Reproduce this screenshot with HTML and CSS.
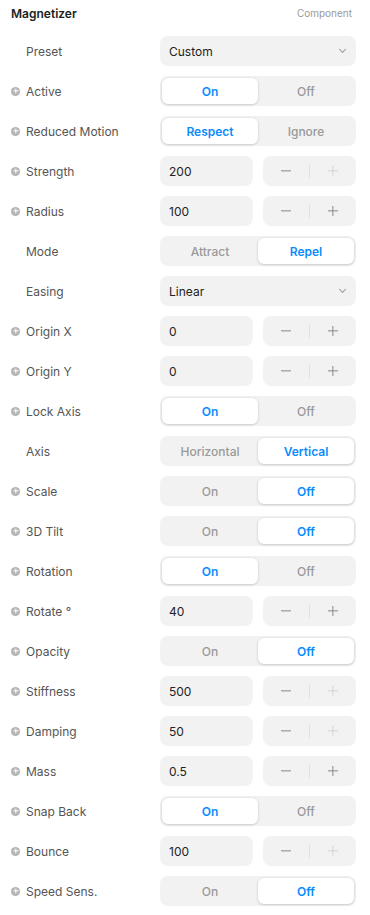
FILE: index.html
```html
<!DOCTYPE html>
<html lang="en">
<head>
    <meta charset="UTF-8">
    <meta name="viewport" content="width=device-width, initial-scale=1.0">
    <title>Magnetizer</title>
    <link rel="stylesheet" href="styles.css">
</head>
<body>
    <div class="panel">
        <div class="panel-head">
            <h2>Magnetizer</h2>
            <span class="kind">Component</span>
        </div>

        <div class="rows">
            <div class="row">
                <div class="label">Preset</div>
                <div class="select"><span>Custom</span><i class="chev"></i></div>
            </div>

            <div class="row">
                <div class="label"><i class="add"></i>Active</div>
                <div class="seg"><span class="on">On</span><span>Off</span></div>
            </div>

            <div class="row">
                <div class="label"><i class="add"></i>Reduced Motion</div>
                <div class="seg"><span class="on">Respect</span><span>Ignore</span></div>
            </div>

            <div class="row">
                <div class="label"><i class="add"></i>Strength</div>
                <div class="num">
                    <div class="field">200</div>
                    <div class="stepper"><span class="minus"></span><b></b><span class="plus off"></span></div>
                </div>
            </div>

            <div class="row">
                <div class="label"><i class="add"></i>Radius</div>
                <div class="num">
                    <div class="field">100</div>
                    <div class="stepper"><span class="minus"></span><b></b><span class="plus"></span></div>
                </div>
            </div>

            <div class="row">
                <div class="label">Mode</div>
                <div class="seg"><span>Attract</span><span class="on">Repel</span></div>
            </div>

            <div class="row">
                <div class="label">Easing</div>
                <div class="select"><span>Linear</span><i class="chev"></i></div>
            </div>

            <div class="row">
                <div class="label"><i class="add"></i>Origin X</div>
                <div class="num">
                    <div class="field">0</div>
                    <div class="stepper"><span class="minus"></span><b></b><span class="plus"></span></div>
                </div>
            </div>

            <div class="row">
                <div class="label"><i class="add"></i>Origin Y</div>
                <div class="num">
                    <div class="field">0</div>
                    <div class="stepper"><span class="minus"></span><b></b><span class="plus"></span></div>
                </div>
            </div>

            <div class="row">
                <div class="label"><i class="add"></i>Lock Axis</div>
                <div class="seg"><span class="on">On</span><span>Off</span></div>
            </div>

            <div class="row">
                <div class="label">Axis</div>
                <div class="seg"><span>Horizontal</span><span class="on">Vertical</span></div>
            </div>

            <div class="row">
                <div class="label"><i class="add"></i>Scale</div>
                <div class="seg"><span>On</span><span class="on">Off</span></div>
            </div>

            <div class="row">
                <div class="label"><i class="add"></i>3D Tilt</div>
                <div class="seg"><span>On</span><span class="on">Off</span></div>
            </div>

            <div class="row">
                <div class="label"><i class="add"></i>Rotation</div>
                <div class="seg"><span class="on">On</span><span>Off</span></div>
            </div>

            <div class="row">
                <div class="label"><i class="add"></i>Rotate °</div>
                <div class="num">
                    <div class="field">40</div>
                    <div class="stepper"><span class="minus"></span><b></b><span class="plus"></span></div>
                </div>
            </div>

            <div class="row">
                <div class="label"><i class="add"></i>Opacity</div>
                <div class="seg"><span>On</span><span class="on">Off</span></div>
            </div>

            <div class="row">
                <div class="label"><i class="add"></i>Stiffness</div>
                <div class="num">
                    <div class="field">500</div>
                    <div class="stepper"><span class="minus"></span><b></b><span class="plus off"></span></div>
                </div>
            </div>

            <div class="row">
                <div class="label"><i class="add"></i>Damping</div>
                <div class="num">
                    <div class="field">50</div>
                    <div class="stepper"><span class="minus"></span><b></b><span class="plus off"></span></div>
                </div>
            </div>

            <div class="row">
                <div class="label"><i class="add"></i>Mass</div>
                <div class="num">
                    <div class="field">0.5</div>
                    <div class="stepper"><span class="minus"></span><b></b><span class="plus"></span></div>
                </div>
            </div>

            <div class="row">
                <div class="label"><i class="add"></i>Snap Back</div>
                <div class="seg"><span class="on">On</span><span>Off</span></div>
            </div>

            <div class="row">
                <div class="label"><i class="add"></i>Bounce</div>
                <div class="num">
                    <div class="field">100</div>
                    <div class="stepper"><span class="minus"></span><b></b><span class="plus off"></span></div>
                </div>
            </div>

            <div class="row">
                <div class="label"><i class="add"></i>Speed Sens.</div>
                <div class="seg"><span>On</span><span class="on">Off</span></div>
            </div>
        </div>
    </div>
</body>
</html>
```

FILE: styles.css
```css
* {
    margin: 0;
    padding: 0;
    box-sizing: border-box;
}

body {
    font-family: Inter, "Noto Sans", sans-serif;
    background: #fff;
    color: #333;
    font-size: 12px;
}

.panel {
    width: 370px;
    padding: 0 14px 0 11px;
}

.panel-head {
    display: flex;
    align-items: center;
    justify-content: space-between;
    height: 26px;
    margin-bottom: 10px;
}

.panel-head h2 {
    font-size: 12px;
    font-weight: 600;
    color: #222;
}

.kind {
    font-size: 10px;
    color: #999;
    padding-right: 4px;
}

.rows {
    display: flex;
    flex-direction: column;
    gap: 10px;
}

.row {
    display: grid;
    grid-template-columns: 149px 196px;
    height: 30px;
    align-items: center;
}

.label {
    display: flex;
    align-items: center;
    padding-left: 15px;
    color: #555;
    font-size: 12px;
}

.add {
    width: 9px;
    height: 9px;
    border-radius: 50%;
    background: #b4b4b4;
    position: relative;
    margin-left: -15px;
    margin-right: 6px;
    flex-shrink: 0;
}

.add::before,
.add::after {
    content: "";
    position: absolute;
    background: #fff;
    left: 50%;
    top: 50%;
    transform: translate(-50%, -50%);
}

.add::before {
    width: 5px;
    height: 1.4px;
}

.add::after {
    width: 1.4px;
    height: 5px;
}

.select {
    height: 30px;
    background: #f2f2f2;
    border-radius: 8px;
    display: flex;
    align-items: center;
    justify-content: space-between;
    padding: 0 11px 0 9px;
    color: #222;
}

.chev {
    width: 5px;
    height: 5px;
    border-right: 1.2px solid #999;
    border-bottom: 1.2px solid #999;
    transform: rotate(45deg);
    margin-top: -3px;
}

.seg {
    height: 30px;
    background: #f2f2f2;
    border-radius: 8px;
    padding: 2px;
    display: grid;
    grid-template-columns: 1fr 1fr;
}

.seg span {
    display: flex;
    align-items: center;
    justify-content: center;
    color: #999;
    font-weight: 500;
    border-radius: 6px;
}

.seg span.on {
    background: #fff;
    color: #0a8cff;
    font-weight: 600;
    box-shadow: 0 1px 3px rgba(0, 0, 0, 0.15), 0 0 0 0.5px rgba(0, 0, 0, 0.04);
}

.num {
    display: grid;
    grid-template-columns: 93px 93px;
    gap: 10px;
}

.field {
    height: 30px;
    background: #f2f2f2;
    border-radius: 8px;
    display: flex;
    align-items: center;
    padding-left: 9px;
    color: #222;
}

.stepper {
    height: 30px;
    background: #f2f2f2;
    border-radius: 8px;
    display: grid;
    grid-template-columns: 1fr 1px 1fr;
    align-items: center;
}

.stepper b {
    height: 14px;
    background: #e0e0e0;
}

.minus,
.plus {
    height: 30px;
    position: relative;
}

.minus::before,
.plus::before,
.plus::after {
    content: "";
    position: absolute;
    left: 50%;
    top: 50%;
    transform: translate(-50%, -50%);
    background: #888;
}

.minus::before,
.plus::before {
    width: 10px;
    height: 1.3px;
}

.plus::after {
    width: 1.3px;
    height: 10px;
}

.plus.off::before,
.plus.off::after {
    background: #d4d4d4;
}
```
